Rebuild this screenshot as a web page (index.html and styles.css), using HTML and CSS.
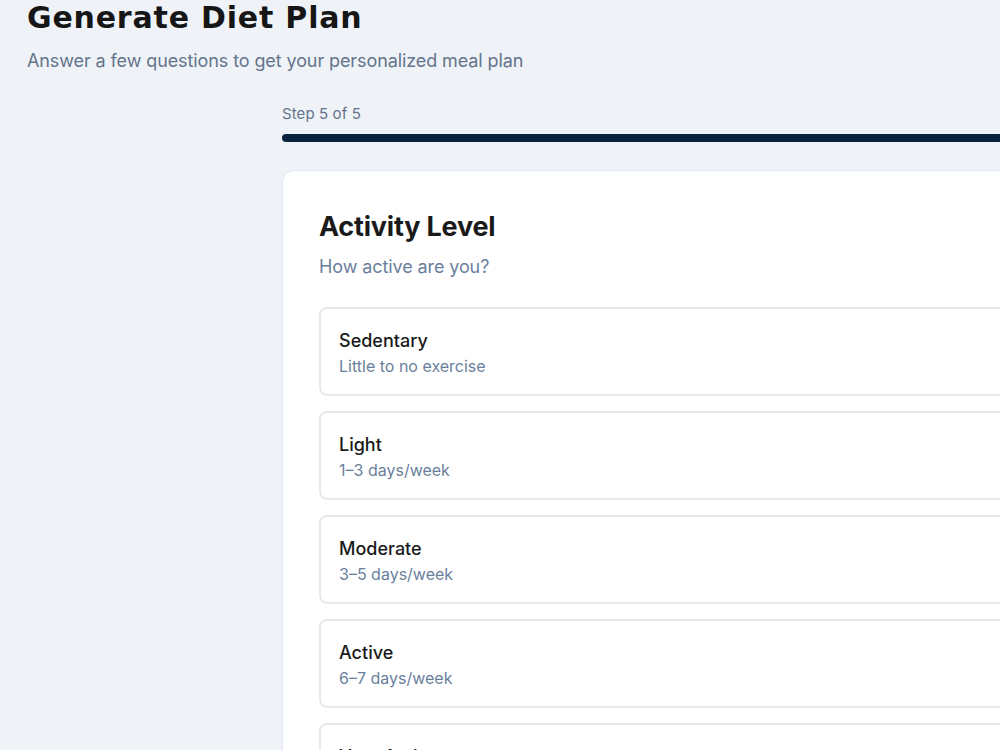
FILE: index.html
```html
<!DOCTYPE html>
<html lang="en">
<head>
    <meta charset="UTF-8">
    <title>Generate Diet Plan</title>
    <link rel="stylesheet" href="styles.css">
</head>
<body>
    <div class="page">
        <header class="page-head">
            <h1>Generate Diet Plan</h1>
            <p class="lead">Answer a few questions to get your personalized meal plan</p>
        </header>

        <main class="wizard">
            <div class="step-label">Step 5 of 5</div>
            <div class="progress"><div class="progress-fill"></div></div>

            <section class="card">
                <h2>Activity Level</h2>
                <p class="question">How active are you?</p>

                <div class="options">
                    <button class="option">
                        <span class="option-title">Sedentary</span>
                        <span class="option-sub">Little to no exercise</span>
                    </button>
                    <button class="option">
                        <span class="option-title">Light</span>
                        <span class="option-sub">1–3 days/week</span>
                    </button>
                    <button class="option">
                        <span class="option-title">Moderate</span>
                        <span class="option-sub">3–5 days/week</span>
                    </button>
                    <button class="option">
                        <span class="option-title">Active</span>
                        <span class="option-sub">6–7 days/week</span>
                    </button>
                    <button class="option">
                        <span class="option-title">Very Active</span>
                        <span class="option-sub">Hard exercise daily</span>
                    </button>
                </div>
            </section>
        </main>
    </div>
</body>
</html>
```

FILE: styles.css
```css
html, body {
    margin: 0;
    overflow: hidden;
}

body {
    font-family: 'Inter', 'Noto Sans', sans-serif;
    background: #eff3f8;
    color: #1a1a1a;
}

.page {
    padding: 0 27px;
    width: 1400px;
}

/* Titel lebar seperti Montserrat */
.page-head h1 {
    font-family: 'DejaVu Sans', sans-serif;
    font-weight: 700;
    font-size: 30px;
    line-height: 36px;
    margin: 0;
    color: #161616;
    letter-spacing: 0.8px;
}

.lead {
    margin: 14px 0 0;
    font-size: 18px;
    line-height: 22px;
    color: #64748b;
    letter-spacing: -0.1px;
}

.wizard {
    margin-left: 255px;
    margin-top: 32px;
    width: 1000px;
}

.step-label {
    font-size: 15px;
    line-height: 20px;
    color: #64748b;
    letter-spacing: 0.1px;
}

.progress {
    margin-top: 10px;
    height: 8px;
    border-radius: 4px;
    background: #dbe3ed;
    overflow: hidden;
}

.progress-fill {
    height: 100%;
    width: 100%;
    background: #0c2340;
}

.card {
    margin-top: 28px;
    background: #fff;
    border: 1px solid #e2e8f0;
    border-radius: 12px;
    padding: 38px 36px 36px;
}

.card h2 {
    margin: 0;
    font-size: 27px;
    line-height: 36px;
    font-weight: 700;
    color: #1a1a1a;
    letter-spacing: -0.2px;
}

.question {
    margin: 10px 0 0;
    font-size: 18px;
    line-height: 24px;
    color: #6a7f9c;
    letter-spacing: -0.1px;
}

.options {
    margin-top: 28px;
    display: flex;
    flex-direction: column;
    gap: 15px;
}

.option {
    display: flex;
    flex-direction: column;
    align-items: flex-start;
    gap: 4px;
    height: 89px;
    padding: 3px 18px 0;
    justify-content: center;
    background: #fff;
    border: 2px solid #e6e8eb;
    border-radius: 8px;
    font-family: inherit;
    text-align: left;
    cursor: pointer;
}

.option-title {
    font-size: 18px;
    line-height: 22px;
    font-weight: 500;
    color: #1a1a1a;
}

.option-sub {
    font-size: 16px;
    line-height: 20px;
    color: #6a7f9c;
}
```
